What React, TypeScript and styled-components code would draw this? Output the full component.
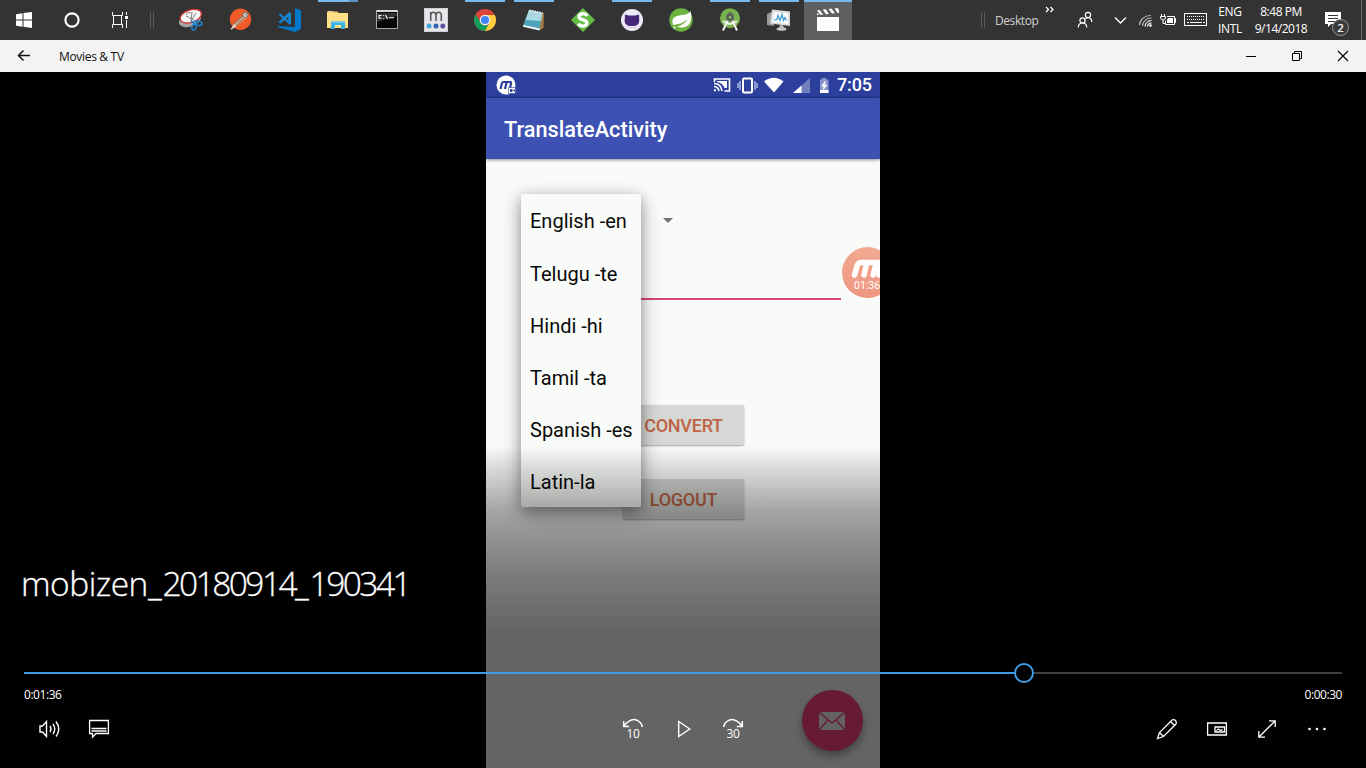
import React from "react";
import styled, { createGlobalStyle } from "styled-components";

const GlobalStyle = createGlobalStyle`
  * { box-sizing: border-box; }
  body { margin: 0; background: #000; overflow: hidden; font-family: "Open Sans", "Noto Sans", sans-serif; }
  svg { display: block; flex: none; overflow: visible; }
`;

const Screen = styled.div`
  width: 1366px;
  height: 768px;
  display: flex;
  flex-direction: column;
  background: #000;
`;

/* ---------- Taskbar ---------- */
const Taskbar = styled.div`
  height: 40px;
  display: flex;
  align-items: center;
  background: #333;
  color: #fff;
`;
const SystemButton = styled.div`
  width: 48px;
  height: 40px;
  display: flex;
  align-items: center;
  justify-content: center;
`;
const Grip = styled.div`
  width: 4px;
  height: 16px;
  border: solid #5b5b5b;
  border-width: 0 1px;
`;
const GripSlot = styled.div`
  width: 23px;
  padding-left: 6px;
`;
const Apps = styled.div`
  display: flex;
  gap: 1px;
`;
const AppSlot = styled.div<{ $open?: boolean; $active?: boolean; $stacked?: boolean }>`
  width: 48px;
  height: 40px;
  display: flex;
  flex-direction: column;
  align-items: center;
  gap: 6px;
  background: ${(p) => (p.$active ? "#5f5f5f" : "transparent")};
  &::before {
    content: "";
    width: ${(p) => (p.$active ? 48 : 40)}px;
    height: 2px;
    background: ${(p) =>
      p.$stacked
        ? "linear-gradient(90deg,#76b9ed 31px,#4d7aa0 31px,#5f95c2 32px)"
        : p.$open
          ? "#76b9ed"
          : "transparent"};
  }
`;
const Tray = styled.div`
  margin-left: auto;
  display: flex;
  align-items: center;
  height: 40px;
  font-size: 12px;
`;
const DesktopLabel = styled.div`
  width: 50px;
  margin-left: 10px;
  color: #d0d0d0;
  letter-spacing: -0.42px;
`;
const TrayIcon = styled.div<{ $w: number }>`
  width: ${(p) => p.$w}px;
  height: 40px;
`;
const TwoLines = styled.div<{ $w: number; $track: number }>`
  width: ${(p) => p.$w}px;
  text-align: center;
  line-height: 17px;
  letter-spacing: ${(p) => p.$track}px;
  white-space: nowrap;
`;
const ShowDesktop = styled.div`
  width: 5px;
  height: 40px;
  border-left: 1px solid #6a6a6a;
`;

/* ---------- Window title bar ---------- */
const TitleBar = styled.div`
  height: 32px;
  display: flex;
  align-items: center;
  background: #f3f3f3;
  color: #111;
`;
const BackButton = styled.div`
  width: 59px;
  padding-left: 17px;
`;
const WindowName = styled.div`
  font-size: 12px;
  letter-spacing: -0.32px;
  padding-top: 1px;
`;
const Caption = styled.div`
  margin-left: auto;
  display: flex;
`;
const CaptionButton = styled.div`
  width: 46px;
  height: 32px;
  display: flex;
  align-items: center;
  justify-content: center;
`;

/* ---------- Video ---------- */
const Stage = styled.div`
  position: relative;
  height: 696px;
  display: flex;
  justify-content: center;
`;
const Phone = styled.div`
  position: relative;
  width: 394px;
  height: 696px;
  overflow: hidden;
  display: flex;
  flex-direction: column;
  background: #f9fbf8;
  font-family: Roboto, sans-serif;
`;
const StatusBar = styled.div`
  height: 26px;
  display: flex;
  align-items: center;
  padding: 0 8px 0 10px;
  background: #2d3f9c;
  color: #fff;
  box-shadow: inset 0 -1px 1px #27368a;
`;
const StatusIcons = styled.div`
  margin-left: auto;
  display: flex;
`;
const Clock = styled.div`
  width: 36px;
  font-size: 18px;
  font-weight: 500;
  line-height: 28px;
  text-align: right;
  letter-spacing: -0.1px;
`;
const AppBar = styled.div`
  height: 61px;
  padding: 2px 18px 0;
  display: flex;
  align-items: center;
  background: #3d51b2;
  color: #fff;
  font-size: 21.7px;
  font-weight: 500;
  box-shadow: 0 1px 3px rgba(0, 0, 0, 0.45);
`;
const Form = styled.div`
  display: flex;
  flex-direction: column;
  align-items: center;
`;
const SpinnerArrow = styled.div`
  width: 0;
  height: 0;
  margin: 59px 0 0 -31px;
  border: 5.5px solid transparent;
  border-top-color: #737573;
  border-bottom: 0;
`;
const Field = styled.div`
  width: 316px;
  height: 77px;
  border-bottom: 2px solid #d9447a;
`;
const FormButton = styled.div<{ $top: number }>`
  width: 121px;
  height: 40px;
  margin-top: ${(p) => p.$top}px;
  padding-left: 1px;
  border-radius: 2px;
  background: #d6d8d5;
  color: #bf6344;
  font-size: 18px;
  font-weight: 500;
  line-height: 41px;
  text-align: center;
  letter-spacing: -0.25px;
  box-shadow: 0 1px 2px rgba(0, 0, 0, 0.35);
`;
const Menu = styled.div`
  position: absolute;
  left: 35px;
  top: 122px;
  width: 120px;
  height: 313px;
  border-radius: 2px;
  background: #f9fbf8;
  color: #090909;
  font-size: 20px;
  box-shadow: 0 4px 14px rgba(0, 0, 0, 0.34), 0 8px 26px rgba(0, 0, 0, 0.18);
`;
const MenuItem = styled.div`
  height: 52.17px;
  padding: 1.45px 0 0 9px;
  line-height: 52px;
  white-space: nowrap;
`;
const Recorder = styled.div`
  position: absolute;
  left: 356px;
  top: 175px;
  width: 51px;
  height: 51px;
  border-radius: 50%;
  background: linear-gradient(#f2a992, #ee9780);
  color: #fff;
  font-size: 10.5px;
  padding: 12px 0 0 9px;
`;
const RecorderTime = styled.div`
  margin: 0 0 0 3px;
  line-height: 13px;
`;
const Fab = styled.div`
  position: absolute;
  left: 315.5px;
  top: 618px;
  width: 61px;
  height: 61px;
  border-radius: 50%;
  display: flex;
  align-items: center;
  justify-content: center;
  background: #ff4081;
  box-shadow: 0 5px 9px rgba(0, 0, 0, 0.35);
`;

/* ---------- Player overlay ---------- */
const Overlay = styled.div`
  position: absolute;
  inset: 0;
  display: flex;
  flex-direction: column;
  justify-content: flex-end;
  padding: 0 24px 15px;
  color: #fff;
  background: linear-gradient(
    transparent 374px,
    rgba(0, 0, 0, 0.13) 396px,
    rgba(0, 0, 0, 0.35) 441px,
    rgba(0, 0, 0, 0.5) 500px,
    rgba(0, 0, 0, 0.6) 560px
  );
`;
const VideoTitle = styled.div`
  margin-left: -3px;
  height: 46px;
  line-height: 46px;
  font-size: 33.5px;
  font-weight: 300;
  -webkit-text-stroke: 0.3px #fff;
  white-space: nowrap;
`;
const TitlePart = styled.span<{ $track: number }>`
  letter-spacing: ${(p) => p.$track}px;
`;
const Seek = styled.div`
  margin-top: 57px;
  height: 20px;
  display: flex;
  align-items: center;
`;
const Played = styled.div`
  width: 990px;
  height: 2px;
  background: #429ce3;
`;
const Thumb = styled.div`
  width: 20px;
  height: 20px;
  border: 2px solid #429ce3;
  border-radius: 50%;
`;
const Remaining = styled.div`
  flex: 1;
  height: 2px;
  background: #404040;
`;
const Times = styled.div`
  display: flex;
  justify-content: space-between;
  height: 22px;
  line-height: 23px;
  font-size: 12px;
  letter-spacing: -0.45px;
`;
const Controls = styled.div`
  display: grid;
  grid-template-columns: 1fr auto 1fr;
  padding: 0 1px;
`;
const Group = styled.div<{ $end?: boolean }>`
  display: flex;
  gap: 2px;
  justify-content: ${(p) => (p.$end ? "flex-end" : "flex-start")};
`;
const ControlButton = styled.div<{ $nudge?: boolean }>`
  width: 48px;
  height: 48px;
  display: flex;
  align-items: center;
  justify-content: center;
  padding-left: ${(p) => (p.$nudge ? 1 : 0)}px;
  background: rgba(255, 255, 255, 0.005);
`;
const SkipButton = styled(ControlButton)`
  flex-direction: column;
  font-size: 12px;
  line-height: 12px;
  letter-spacing: -0.3px;
`;

const Art = ({ children, size = 24 }: { children: React.ReactNode; size?: number }) => (
  <svg width={size} height={size} viewBox="0 0 24 24" fill="none">{children}</svg>
);

const SnipIcon = () => (
  <Art>
    <ellipse cx="11" cy="12" rx="11.5" ry="6.5" fill="#a3a3a3" transform="rotate(-18 11 12)" />
    <ellipse cx="11.8" cy="8.2" rx="11" ry="6.2" fill="#f6f6f6" stroke="#d8343c" strokeWidth="1.3" transform="rotate(-18 11.8 8.2)" />
    <path d="M12 5Q7 3.5 7.5 7M7 8l8 4M13 4l-1 10M17 5l-5 8" stroke="#777" strokeWidth=".9" />
    <path d="M12 14l8-1M14 13l1 4" stroke="#1f7fca" strokeWidth="1.6" />
    <ellipse cx="20" cy="15.5" rx="3" ry="2.1" stroke="#1f7fca" strokeWidth="1.5" />
    <ellipse cx="15" cy="19.3" rx="2" ry="2.9" stroke="#1f7fca" strokeWidth="1.5" transform="rotate(20 15 19.3)" />
  </Art>
);
const PostmanIcon = () => (
  <Art>
    <circle cx="12.5" cy="11.2" r="10.7" fill="#f15a29" />
    <path d="M15 7L6 16l-3 6 6-4 9-8z" fill="#f5c09b" />
    <path d="M15 8L5 17M16 10L8 18" stroke="#8d725f" strokeWidth="1.2" />
    <path d="M2 22l4-6 2 2z" fill="#d8d3ce" />
    <circle cx="17.5" cy="6.8" r="2.6" fill="#ddd" stroke="#666" />
    <circle cx="18" cy="6.5" r="1" fill="#777" />
  </Art>
);
const CodeIcon = () => (
  <Art>
    <path d="M18 0l6 2.5v18.5L18 24 1 19.2V18l17 1.2z" fill="#0079cc" />
    <path d="M1.5 6.5l2-1L14 15.5l-1.5 1.2zM1.5 14.3L12 4l2 1.2v11.3l-2.7-2V8.7L3.4 15.4z" fill="#1585d0" />
  </Art>
);
const ExplorerIcon = () => (
  <Art>
    <path d="M1 3.5h10l2 1.5h9v15H1z" fill="#f4cd63" />
    <path d="M1 5h21v15H1z" fill="#fddf85" />
    <path d="M2 3.8h5" stroke="#fff4c9" />
    <path d="M5 13h14v8h-4v-4H9v4H5z" fill="#3ab0e4" />
    <path d="M5 13h14v2H5z" fill="#72cbed" />
  </Art>
);
const TerminalIcon = () => (
  <Art>
    <path d="M1.5 2.5h21v18h-21z" fill="#050505" stroke="#a6a6a6" />
    <path d="M1.5 3h21" stroke="#d6d9dd" strokeWidth="2" />
    <path d="M2 5h20v3L9 12l-7 2z" fill="#333" />
    <path d="M6.5 7.5H4v2.8h2.5M8.5 7.3v.6M8.5 10v.6M10.5 7l2 4M14 9.8h5" stroke="#fff" strokeWidth="1.1" />
  </Art>
);
const MarkIcon = () => (
  <Art>
    <rect x="0.5" y="0.5" width="23" height="23" fill="#e7e7e9" stroke="#cfcfd4" />
    <path d="M6.7 13V4M6.7 7q.5-2.8 2.7-2.8T12 7v6M12 7q.5-2.8 2.7-2.8T17.3 7v6" stroke="#5a5a5e" strokeWidth="1.6" />
    <circle cx="5" cy="18" r="2.5" fill="#46a6dc" /><circle cx="12" cy="18" r="2.5" fill="#3566b7" /><circle cx="18.8" cy="18" r="2.5" fill="#6054a7" />
  </Art>
);
const ChromeIcon = () => (
  <Art>
    <circle cx="12" cy="12" r="11" fill="#db4437" />
    <path d="M2.5 6.5A11 11 0 0 0 12 23l4.8-8.2A5 5 0 0 1 7.7 14.5z" fill="#0f9d58" />
    <path d="M12 7h9.8A11 11 0 0 1 12 23l4.5-8.2z" fill="#ffcd40" />
    <circle cx="12" cy="12" r="5.3" fill="#f1f1f1" /><circle cx="12" cy="12" r="4.1" fill="#4285f4" />
  </Art>
);
const NotepadIcon = () => (
  <Art>
    <path d="M8 3l14 2-.5 15-3.5 2z" fill="#a67d43" />
    <path d="M7 2l13.5 3-3 16L1 17.5z" fill="#4fa3b8" />
    <path d="M7 2l13.5 3-1.5 8L3.5 12z" fill="#a9d8e2" />
    <path d="M1 17l17 3.5-.5 2L1 18.7z" fill="#eff9fa" />
    <path d="M7.5 2.5l13 2.5" stroke="#e8eef0" strokeWidth="2" strokeDasharray="1.5 1" />
  </Art>
);
const SIcon = () => (
  <Art>
    <path d="M12 0l12 12-12 12L0 12z" fill="#65bd45" />
    <path d="M16.5 7.8Q14.5 5.3 11.3 5.7 7.8 6.3 8.1 9q.3 1.9 3.9 2.8 4 1 3.9 3.2-.2 2.8-3.8 3.1-3.3.1-4.9-2.3" stroke="#fff" strokeWidth="3.4" />
  </Art>
);
const GithubIcon = () => (
  <Art>
    <circle cx="12" cy="12" r="11" fill="#eceaf6" />
    <path d="M5 6.5l3.600 1h6.8l3.6-1 .2 4.6q.6 5-3 6.500-4.500 1-8.500 0-4-2-2.900-6.500z" fill="#472878" />
    <path d="M5.5 18.5q6.5 2.5 13 0" stroke="#d8d0e9" />
  </Art>
);
const SpringIcon = () => (
  <Art>
    <circle cx="12" cy="12" r="11.7" fill="#6db33f" />
    <path d="M21.5 3Q24 13 19 17.5q-4.2 3.2-11 1.3Q14 17.5 19 11 12.8 16.3 4 17 1.5 10 8 8t9-1.5q3-.5 4.5-3.5z" fill="#fff" />
    <circle cx="5.5" cy="19.5" r="1" fill="#fff" />
  </Art>
);
const StudioIcon = () => (
  <Art>
    <circle cx="12" cy="10.3" r="10" fill="#78b34d" />
    <path d="M11.4 9L5 22.5M12.8 9L19 22.5M5 13q6.5 6 14 0" stroke="#f2f2f2" strokeWidth="2" />
    <path d="M12 4.5v4" stroke="#555" strokeWidth="3" /><circle cx="12" cy="9.3" r="4" fill="#58615a" /><circle cx="12" cy="9.3" r="1.2" fill="#8cc563" />
  </Art>
);
const MonitorIcon = () => (
  <Art>
    <path d="M0 6l7-3v15l-7-1z" fill="#989b9c" />
    <path d="M5 1.5l18 2V18L3 15.5z" fill="#d9dcdd" />
    <path d="M7 4l14 1.5V16L5.5 14z" fill="#f9fbfc" />
    <path d="M7 12l3-.5 1-4 2 5 2-6 1.5 6 1.5-3 1.5 3" stroke="#369bce" strokeWidth="1.2" />
    <path d="M13 17l3 .3 1 3h-5z" fill="#bbb" /><ellipse cx="14.5" cy="21" rx="5" ry="1.8" fill="#c6c7c8" />
  </Art>
);
const MoviesIcon = () => (
  <Art>
    <path d="M1 9h22v14H1z" fill="#fff" />
    <path d="M1 2.300l2.600-.3 3.600 4.500-3 .3zM6.700 1.500l3-.3L13 5.800l-3 .4zM12.500 1l3-.4L19 5.200l-3 .3zM18.500.4L21.500 0 23 2v2.700l-1.500.2zM1 4.500L3 7H1z" fill="#fff" />
  </Art>
);

const apps: { icon: React.FC; open?: boolean; active?: boolean; stacked?: boolean }[] = [
  { icon: SnipIcon },
  { icon: PostmanIcon },
  { icon: CodeIcon },
  { icon: ExplorerIcon, open: true, stacked: true },
  { icon: TerminalIcon },
  { icon: MarkIcon },
  { icon: ChromeIcon, open: true },
  { icon: NotepadIcon, open: true },
  { icon: SIcon },
  { icon: GithubIcon, open: true },
  { icon: SpringIcon },
  { icon: StudioIcon, open: true },
  { icon: MonitorIcon, open: true },
  { icon: MoviesIcon, open: true, active: true },
];

const languages = ["English -en", "Telugu -te", "Hindi -hi", "Tamil -ta", "Spanish -es", "Latin-la"];

const MShape = () => (
  <svg width="34" height="20" viewBox="0 0 34 20" fill="none" stroke="#fff" strokeWidth="5.5" strokeLinejoin="round" strokeLinecap="round">
    <path d="M3.5 16L6 7q1-3.5 4-3.5h18q3 0 2 4L28 16M15.500 5l-2.500 11M25 5l-2.800 11" />
  </svg>
);

export default function App() {
  return (
    <Screen>
      <GlobalStyle />
      <Taskbar>
        <SystemButton>
          <svg width="16" height="16" viewBox="0 0 16 16" fill="#fff"><path d="M0 2.2L6.5 1.3V7.5H0zM7.5 1.1L16 0v7.5H7.5zM0 8.5h6.5v6.2L0 13.8zM7.5 8.5H16V16l-8.5-1.2z" /></svg>
        </SystemButton>
        <SystemButton>
          <svg width="16" height="16" viewBox="0 0 16 16" fill="none"><circle cx="8" cy="8" r="6.6" stroke="#fff" strokeWidth="2.1" /></svg>
        </SystemButton>
        <SystemButton>
          <svg width="16" height="16" viewBox="0 0 16 16" fill="none" stroke="#fff"><path d="M.5 0v3.5h10V0M.5 16v-3.5h10V16M1.5 4v8M9.5 4v8M14.5 0v3M14.5 8v8" /><path d="M13 4h3v3h-3z" fill="#fff" stroke="none" /></svg>
        </SystemButton>
        <GripSlot><Grip /></GripSlot>
        <Apps>
          {apps.map(({ icon: Icon, open, active, stacked }, i) => (
            <AppSlot key={i} $open={open} $active={active} $stacked={stacked}><Icon /></AppSlot>
          ))}
        </Apps>
        <Tray>
          <Grip />
          <DesktopLabel>Desktop</DesktopLabel>
          <TrayIcon $w={32}>
            <svg width="32" height="40" fill="none" stroke="#fff" strokeWidth="1.3"><path d="M1 7l2.5 2.5L1 12M5.5 7L8 9.5 5.5 12" /></svg>
          </TrayIcon>
          <TrayIcon $w={36}>
            <svg width="36" height="40" fill="none" stroke="#fff" strokeWidth="1.2"><circle cx="5.5" cy="20.5" r="2.6" /><path d="M1.3 27.5q0-4.5 4.2-4.5t4.2 4.5" /><circle cx="11" cy="15" r="2.6" /><path d="M8.5 18.5q3-1.5 5 0 1.3 1 1.3 3.5" /></svg>
          </TrayIcon>
          <TrayIcon $w={26}>
            <svg width="26" height="40" fill="none" stroke="#fff" strokeWidth="1.3"><path d="M2 17.500l5.500 5.500 5.500-5.500" /></svg>
          </TrayIcon>
          <TrayIcon $w={21}>
            <svg width="21" height="40" fill="none" stroke="#fff" strokeWidth="1.2"><g stroke="#b5b5b5"><path d="M.5 25A11 10 0 0 1 12 15.5" /><path d="M3.5 26A9 8 0 0 1 12.5 18" /></g><path d="M6 26.5A7 6.5 0 0 1 12.5 20.5M8.5 26.5A4 4 0 0 1 12.5 23" /><circle cx="11.5" cy="25.5" r="1.3" fill="#fff" stroke="none" /></svg>
          </TrayIcon>
          <TrayIcon $w={24}>
            <svg width="24" height="40" fill="none" stroke="#fff"><path d="M1.5 14v2M4.5 14v2M.5 16.5h5v2l-2.500 1.500-2.500-1.500zM3 20v3.500h2M7 16.500h7.500v8h-9v-4M14.500 18.500h1v4h-1" /><path d="M8 18h5v5H7v-3z" fill="#fff" stroke="none" /></svg>
          </TrayIcon>
          <TrayIcon $w={30}>
            <svg width="30" height="40" fill="none" stroke="#fff"><rect x=".5" y="13.5" width="22" height="12" /><path d="M3 16.5h18M3 19.5h18" strokeDasharray="1 1" /><path d="M3 22.5h2M6 22.5h12M19 22.5h2" /></svg>
          </TrayIcon>
          <TwoLines $w={32} $track={-0.35}>ENG<br />INTL</TwoLines>
          <TwoLines $w={70} $track={-0.48}>8:48 PM<br />9/14/2018</TwoLines>
          <TrayIcon $w={45}>
            <svg width="45" height="40"><path d="M9 12h16v12h-10l-3 3v-3H9z" fill="#fff" /><path d="M12 15.5h10M12 18.5h10M12 21.5h7" stroke="#333" /><circle cx="24.500" cy="27.5" r="8" fill="#3b3b3b" stroke="#999" /><text x="24.5" y="31.5" fill="#fff" fontSize="11.5" textAnchor="middle" fontWeight="600">2</text></svg>
          </TrayIcon>
          <ShowDesktop />
        </Tray>
      </Taskbar>

      <TitleBar>
        <BackButton>
          <svg width="14" height="12" viewBox="0 0 14 12" fill="none" stroke="#111" strokeWidth="1.5"><path d="M13 5.5H1.5M6.5.5l-5 5 5 5" /></svg>
        </BackButton>
        <WindowName>Movies &amp; TV</WindowName>
        <Caption>
          <CaptionButton><svg width="10" height="10"><path d="M0 5.5h10" stroke="#000" /></svg></CaptionButton>
          <CaptionButton><svg width="10" height="10" fill="none" stroke="#000"><path d="M.5 2.5h7v7h-7zM2.5 2.5v-2h7v7h-2" /></svg></CaptionButton>
          <CaptionButton><svg width="10" height="10" stroke="#000" strokeWidth="1.1"><path d="M0 0l10 10M10 0L0 10" /></svg></CaptionButton>
        </Caption>
      </TitleBar>

      <Stage>
        <Phone>
          <StatusBar>
            <svg width="21" height="20" viewBox="0 0 21 20"><circle cx="10" cy="10" r="9.5" fill="#fff" /><path d="M4.5 14l1.5-6q.3-1 1.5-1h6.8q1.1 0 .8 1.2L13.8 14M10.5 7.5L9 14" fill="none" stroke="#2d3f9c" strokeWidth="2.2" /><path d="M12.5 12.5h7v6h-7z" fill="#fff" stroke="#2d3f9c" strokeWidth=".6" /><path d="M14 14h2.5v3H14zM17 15.5l2-1.5v3z" fill="#2d3f9c" /></svg>
            <StatusIcons>
              <svg width="123" height="26" fill="none">
                <g stroke="#fff" strokeWidth="1.6"><path d="M1.5 10V7h15v12h-5" /><path d="M1 11.5q7 0 8 7.5M1 14.5q4.3.4 5 4.5" /></g><path d="M1 17q2 0 2.200 2.200H1zM4 9h10v7h-2.500Q9.800 11 4 10z" fill="#fff" />
                <rect x="30" y="6.5" width="9" height="14" rx="1" stroke="#fff" strokeWidth="2" /><path d="M27 9v9M42 9v9M25 11v5M44 11v5" stroke="#cbd2f2" strokeWidth="1.2" />
                <path d="M51 9.5Q61 2 70.5 9.5L61 20.5z" fill="#fff" />
                <path d="M97 6v15H80z" fill="#7380be" /><path d="M88.5 13.5V21H80z" fill="#fff" />
                <path d="M107 7.5h2V6h4v1.5h2.5V21H107z" fill="#8995cc" /><path d="M107 18h8.5v3H107z" fill="#fff" /><path d="M112.5 9l-4 5h2.5l-1 4 4-5h-2.500z" fill="#fff" stroke="#fff" strokeWidth=".6" />
              </svg>
            </StatusIcons>
            <Clock>7:05</Clock>
          </StatusBar>
          <AppBar>TranslateActivity</AppBar>
          <Form>
            <SpinnerArrow />
            <Field />
            <FormButton $top={105}>CONVERT</FormButton>
            <FormButton $top={34}>LOGOUT</FormButton>
          </Form>
          <Recorder><MShape /><RecorderTime>01:36</RecorderTime></Recorder>
          <Menu>{languages.map((l) => <MenuItem key={l}>{l}</MenuItem>)}</Menu>
          <Fab>
            <svg width="28" height="20" viewBox="0 0 28 20"><path d="M1 1h26v18H1z" fill="#f4f4f4" /><path d="M1 1l13 11L27 1M1 19l9-10M27 19l-9-10" fill="none" stroke="#ff4081" strokeWidth="1.5" /></svg>
          </Fab>
        </Phone>

        <Overlay>
          <VideoTitle>
            <TitlePart $track={-0.5}>mobizen</TitlePart>
            <TitlePart $track={0.8}>_</TitlePart>
            <TitlePart $track={-2.55}>20180914</TitlePart>
            <TitlePart $track={0.8}>_</TitlePart>
            <TitlePart $track={-2.55}>190341</TitlePart>
          </VideoTitle>
          <Seek><Played /><Thumb /><Remaining /></Seek>
          <Times><span>0:01:36</span><span>0:00:30</span></Times>
          <Controls>
            <Group>
              <ControlButton $nudge><svg width="22" height="20" viewBox="0 0 22 20" fill="none" stroke="#fff" strokeWidth="1.4"><path d="M1 7h2.5l4-4.5v15l-4-4.5H1zM11 7q2 3 0 6M14 5q3.5 5 0 10M17 2.5q5.5 7.5 0 15" /></svg></ControlButton>
              <ControlButton><svg width="20" height="20" viewBox="0 0 20 20" fill="none" stroke="#fff" strokeWidth="1.3"><path d="M.6 1.5h18.8v13H7l-3.5 3.700v-3.700H.6zM2.500 9.500h15M2.500 12h15" /></svg></ControlButton>
            </Group>
            <Group>
              <SkipButton><svg width="20" height="9" viewBox="0 0 20 9" fill="none" stroke="#fff" strokeWidth="1.5"><path d="M.7 2v5.5h5.5M1 7q8-10 15-4.5 3 2 3.3 5.5" /></svg>10</SkipButton>
              <ControlButton $nudge><svg width="14" height="20" viewBox="0 0 14 20" fill="none" stroke="#fff" strokeWidth="1.4"><path d="M1.7 2.5v15L12.7 10z" /></svg></ControlButton>
              <SkipButton><svg width="20" height="9" viewBox="0 0 20 9" fill="none" stroke="#fff" strokeWidth="1.5"><path d="M19.3 2v5.5h-5.5M19 7Q11-3 4 2.5 1 4.5.7 8" /></svg>30</SkipButton>
            </Group>
            <Group $end>
              <ControlButton><svg width="22" height="22" viewBox="0 0 22 22" fill="none" stroke="#fff" strokeWidth="1.3"><path d="M1.5 20.5l2-6L16 2q2-1 3.5.5t.5 3.500L7.500 18.500zM14.500 3.500l4 4M3.500 14.500l4 4" /></svg></ControlButton>
              <ControlButton><svg width="20" height="14" viewBox="0 0 20 14" fill="none" stroke="#fff" strokeWidth="1.3"><path d="M.6 1h18.8v12H.6zM8 5h9.5v5H8z" /><path d="M9.5 8.5l2-1.5 2 1.5 2-.8" /></svg></ControlButton>
              <ControlButton><svg width="18" height="18" viewBox="0 0 18 18" fill="none" stroke="#fff" strokeWidth="1.3"><path d="M1 17L17 1M11 .8h6.2V7M7 17.2H.8V11" /></svg></ControlButton>
              <ControlButton><svg width="18" height="4" viewBox="0 0 18 4" fill="#fff"><circle cx="1.5" cy="2" r="1.3" /><circle cx="9" cy="2" r="1.3" /><circle cx="16.5" cy="2" r="1.3" /></svg></ControlButton>
            </Group>
          </Controls>
        </Overlay>
      </Stage>
    </Screen>
  );
}
